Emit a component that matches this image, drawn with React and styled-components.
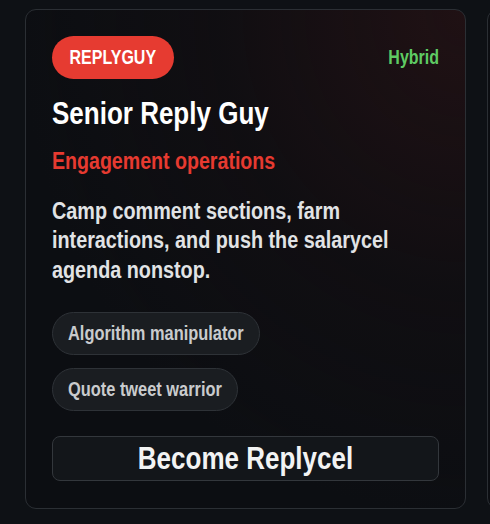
import React from 'react';
import styled, { createGlobalStyle, css } from 'styled-components';

const GlobalStyle = createGlobalStyle`
  html, body {
    margin: 0;
    padding: 0;
    background: #0e1115;
  }
  body {
    font-family: "Liberation Sans", Arial, Helvetica, sans-serif;
  }
`;

// the reference face is a condensed grotesque; stretch Liberation Sans vertically to get there
const STRETCH = 1.22;

const tall = css`
  display: inline-block;
  transform: scaleY(${STRETCH});
  transform-origin: center;
`;

const Board = styled.div`
  display: flex;
  align-items: stretch;
  gap: 21px;
  padding: 9px 0 0 25px;
  width: 490px;
  box-sizing: border-box;
  overflow: hidden;
`;

const Card = styled.div`
  flex: 0 0 441px;
  box-sizing: border-box;
  padding: 26px 26px 27px;
  border: 1px solid #2b2f34;
  border-radius: 11px;
  background:
    radial-gradient(ellipse at 100% 0%, rgba(52, 20, 22, 0.5) 0%, rgba(30, 14, 16, 0.22) 40%, rgba(12, 14, 18, 0) 72%),
    #0c0e12;
  display: flex;
  flex-direction: column;
`;

const Header = styled.div`
  display: flex;
  justify-content: space-between;
  align-items: center;
`;

const Badge = styled.span`
  display: inline-flex;
  align-items: center;
  height: 43px;
  padding: 0 17.5px;
  border-radius: 22px;
  background: #e63b31;
  color: #fff;
  font-weight: 700;
  font-size: 16px;
`;

const Mode = styled.span`
  ${tall};
  color: #5fcb63;
  font-weight: 700;
  font-size: 16px;
`;

const Label = styled.span`
  ${tall};
`;

const Title = styled.h2`
  margin: 15px 0 0;
  color: #fff;
  font-size: 26px;
  line-height: 38px;
  font-weight: 700;
  transform: scaleY(${STRETCH});
`;

const Dept = styled.div`
  margin-top: 15px;
  color: #e63a30;
  font-size: 19.6px;
  line-height: 29px;
  font-weight: 700;
  transform: scaleY(${STRETCH});
`;

const Desc = styled.p`
  margin: 21px 0 16px;
  color: #e1e3e5;
  font-size: 19.8px;
  line-height: ${29 / STRETCH}px;
  font-weight: 700;
  transform: scaleY(${STRETCH});
  transform-origin: top;
`;

const Tags = styled.div`
  margin-top: 28px;
  display: flex;
  flex-wrap: wrap;
  gap: 13px;
`;

const Tag = styled.span`
  display: inline-flex;
  align-items: center;
  height: 43px;
  box-sizing: border-box;
  padding: 0 15px;
  border: 1px solid #2e3237;
  border-radius: 22px;
  background: #1a1d21;
  color: #c9cbcd;
  font-size: 16.4px;
  font-weight: 700;
`;

const Action = styled.button`
  margin-top: 25px;
  height: 45px;
  border: 1px solid #33373c;
  border-radius: 8px;
  background: #13161a;
  color: #f2f3f3;
  font-family: inherit;
  font-size: 26px;
  font-weight: 700;
  cursor: pointer;
`;

const tags = ['Algorithm manipulator', 'Quote tweet warrior'];

export default function App() {
  return (
    <>
      <GlobalStyle />
      <Board>
        <Card>
          <Header>
            <Badge>
              <Label>REPLYGUY</Label>
            </Badge>
            <Mode>Hybrid</Mode>
          </Header>
          <Title>Senior Reply Guy</Title>
          <Dept>Engagement operations</Dept>
          <Desc>
            Camp comment sections, farm interactions, and push the salarycel agenda nonstop.
          </Desc>
          <Tags>
            {tags.map((t) => (
              <Tag key={t}>
                <Label>{t}</Label>
              </Tag>
            ))}
          </Tags>
          <Action>
            <Label>Become Replycel</Label>
          </Action>
        </Card>
        <Card />
      </Board>
    </>
  );
}
